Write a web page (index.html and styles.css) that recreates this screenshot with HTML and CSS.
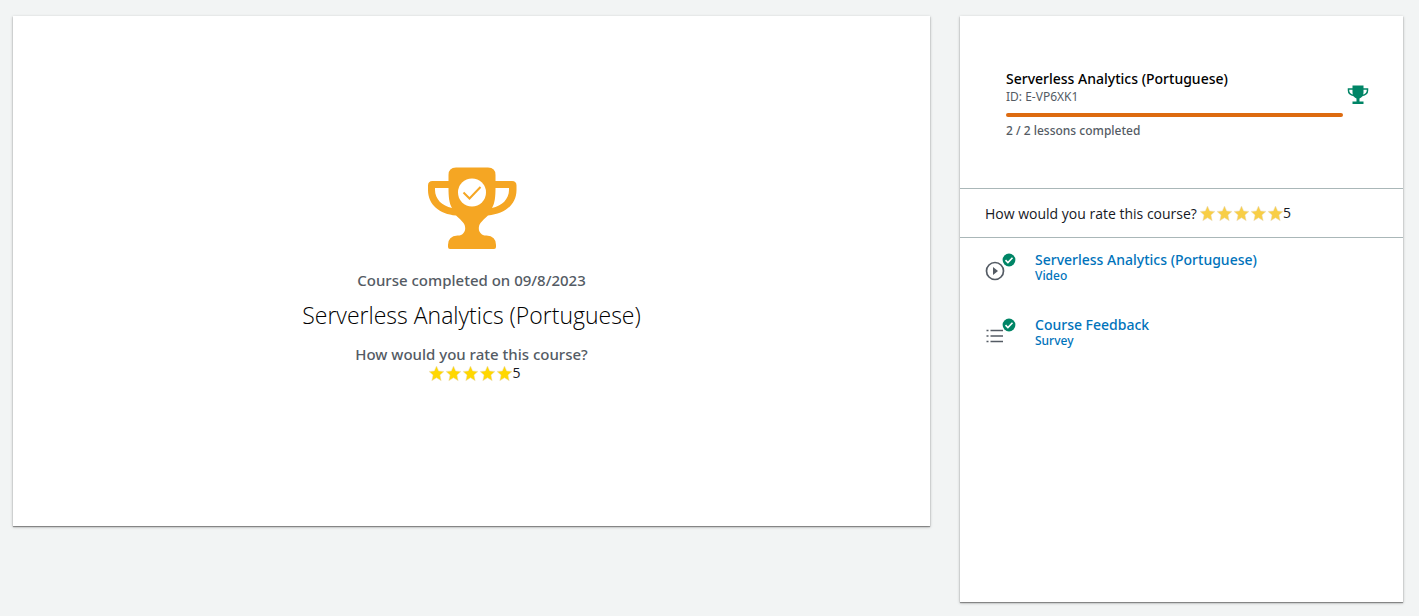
FILE: index.html
```html
<!DOCTYPE html>
<html lang="en">
<head>
<meta charset="utf-8">
<title>Serverless Analytics (Portuguese)</title>
<link rel="stylesheet" href="styles.css">
</head>
<body>
<svg class="defs" aria-hidden="true">
  <symbol id="star" viewBox="0 0 17 17"><path d="M8.500 1l2.200 4.900 5.300.5-4 3.700 1.200 5.600-4.700-2.900-4.700 2.900L5 10.100 1 6.400l5.300-.5z" stroke="#e9dcc4" stroke-width=".5"/></symbol>
  <symbol id="done" viewBox="0 0 14 14"><circle cx="7" cy="7" r="6.400" fill="#008566"/><path d="M3.500 7.200l2.400 2.300 4.600-4.700" fill="none" stroke="#fff" stroke-width="1.600"/></symbol>
</svg>
<div class="page">
  <main class="panel completion">
    <svg class="trophy" viewBox="0 0 90 84" aria-hidden="true">
      <path fill="#f5a623" fill-rule="evenodd" d="M29 1.500h32q7.500 0 7.500 7.500v6H85q4.500 0 4.500 4.500V24c0 15-12 24-28.500 25.500-3 2.500-5.500 5-7.500 7.500-2.500 3.500-2 8 0 10 1.500 2 3 2.500 6 2.500q9.500.5 9.500 9.500v2q0 2-2 2H23q-2 0-2-2v-2q0-9 9.500-9.500c3 0 4.500-.5 6-2.500 2-2 2.500-6.500 0-10-2-2.500-4.500-5-7.500-7.500C12.500 48 1 39 1 24v-4.500Q1 15 5.500 15h16V9q0-7.500 7.500-7.500zM8 22v2c0 9 7 16 17 18-3-5-3.500-12-3.500-20zm60.500 0c0 8-.5 15-3.500 20 10-2 17-9 17-18v-2z"/>
      <circle cx="45" cy="26.500" r="14" fill="#fff"/>
      <path d="M36.500 26.500l6 6L53.500 21" fill="none" stroke="#f5a623" stroke-width="2"/>
    </svg>
    <p class="note">Course completed on 09/8/2023</p>
    <h1 class="title">Serverless Analytics (Portuguese)</h1>
    <p class="question">How would you rate this course?</p>
    <div class="rating gold" aria-label="Rated 5 out of 5">
      <svg class="star"><use href="#star"/></svg><svg class="star"><use href="#star"/></svg><svg class="star"><use href="#star"/></svg><svg class="star"><use href="#star"/></svg><svg class="star"><use href="#star"/></svg><span class="score">5</span>
    </div>
  </main>
  <aside class="panel sidebar">
    <header class="summary">
      <div class="progress">
        <h2 class="course">Serverless Analytics (Portuguese)</h2>
        <p class="small">ID: E-VP6XK1</p>
        <div class="bar" role="progressbar" aria-label="Lessons completed" aria-valuemin="0" aria-valuemax="2" aria-valuenow="2"></div>
        <p class="small count">2 / 2 lessons completed</p>
      </div>
      <svg class="cup" viewBox="0 0 22 20" aria-hidden="true">
        <path fill="#008566" d="M5.500 0.500h11v7c0 3-1.500 5-4 6v3h4v2.500h-11v-2.500h4v-3c-2.500-1-4-3-4-6z"/>
        <path d="M6 4H1.500v1.500C1.500 8 3.500 10 7 10.500M16 4h4.500v1.500C20.500 8 18.500 10 15 10.500" fill="none" stroke="#008566" stroke-width="1.500"/>
      </svg>
    </header>
    <div class="rate">
      <span>How would you rate this course?</span>
      <div class="rating amber" aria-label="Rated 5 out of 5">
        <svg class="star"><use href="#star"/></svg><svg class="star"><use href="#star"/></svg><svg class="star"><use href="#star"/></svg><svg class="star"><use href="#star"/></svg><svg class="star"><use href="#star"/></svg><span class="score">5</span>
      </div>
    </div>
    <nav class="lessons">
      <a class="lesson" href="#video">
        <span class="icon">
          <svg class="kind" viewBox="0 0 20 20"><circle cx="10" cy="10" r="8.500" fill="none" stroke="#545b64" stroke-width="1.700"/><path d="M8 6v8l5-4z" fill="#545b64"/></svg>
          <svg class="badge"><use href="#done"/></svg>
        </span>
        <span class="label"><span class="name">Serverless Analytics (Portuguese)</span><span class="type">Video</span></span>
      </a>
      <a class="lesson" href="#survey">
        <span class="icon">
          <svg class="kind" viewBox="0 0 20 20"><path d="M5.500 4.500H18M5.500 10H18M5.500 15.500H18M1.500 4.500h2M1.500 10h2M1.500 15.500h2" fill="none" stroke="#545b64" stroke-width="1.700"/></svg>
          <svg class="badge"><use href="#done"/></svg>
        </span>
        <span class="label"><span class="name">Course Feedback</span><span class="type">Survey</span></span>
      </a>
    </nav>
  </aside>
</div>
</body>
</html>
```
FILE: styles.css
```css
* { box-sizing: border-box; }
body {
  margin: 0;
  background: #f2f4f4;
  color: #16191f;
  font-family: "Noto Sans", "Open Sans", sans-serif;
  font-size: 14px;
}
h1, h2, p { margin: 0; }
svg { display: block; }
.defs { position: absolute; width: 0; height: 0; }
.page {
  display: grid;
  grid-template-columns: 917fr 443fr;
  gap: 30px;
  align-items: start;
  padding: 16px 16px 14px 13px;
}
.panel {
  background: #fff;
  box-shadow: 0 1px 1px rgba(0, 0, 0, .35), 0 1px 3px rgba(0, 0, 0, .25);
}
.completion {
  display: flex;
  flex-direction: column;
  align-items: center;
  min-height: 510px;
  padding: 150px 20px 100px;
}
.trophy { width: 90px; height: 84px; }
.note, .question {
  color: #545b64;
  font-size: 15px;
  font-weight: 500;
  line-height: 20px;
}
.note { margin-top: 20px; }
.title {
  margin: 9px 0 13px;
  color: #000;
  font-family: "Open Sans", sans-serif;
  font-size: 23px;
  font-weight: 300;
  line-height: 32px;
}
.rating { display: flex; align-items: center; line-height: 18px; }
.star { width: 17px; height: 17px; }
.rating, .rate { font-family: "Open Sans", sans-serif; }
.score { margin-left: -1px; }
.gold { padding-left: 6px; fill: gold; }
.amber { fill: #f8ce46; }
.sidebar { min-height: calc(100vh - 30px); }
.summary {
  display: flex;
  align-items: flex-start;
  gap: 4px;
  padding: 53px 34px 48px 46px;
}
.progress { flex: 1; }
.course {
  color: #000;
  font-size: 14px;
  font-weight: 500;
  line-height: 20px;
}
.small { color: #545b64; font-size: 12px; line-height: 16px; }
.count { font-weight: 500; }
.bar {
  height: 4px;
  margin: 8px 0 6px;
  border-radius: 2px;
  background: #dd6b10;
}
.count { padding-bottom: 1px; }
.cup { width: 22px; height: 20px; margin-top: 16px; }
.rate {
  display: flex;
  align-items: center;
  gap: 2px;
  height: 50px;
  padding: 0 25px;
  border: solid #aab7b8;
  border-width: 1px 0;
}
.lessons { display: flex; flex-direction: column; gap: 29px; padding: 12px 25px; }
.lesson {
  display: flex;
  gap: 19px;
  color: #0073bb;
  text-decoration: none;
}
.icon { position: relative; width: 31px; height: 36px; padding-top: 11px; }
.kind { width: 20px; height: 20px; }
.badge { position: absolute; top: 3px; right: 0; width: 14px; height: 14px; }
.label { display: flex; flex-direction: column; }
.name { font-weight: 500; line-height: 20px; }
.type { font-size: 12px; font-weight: 500; line-height: 12px; }
```
